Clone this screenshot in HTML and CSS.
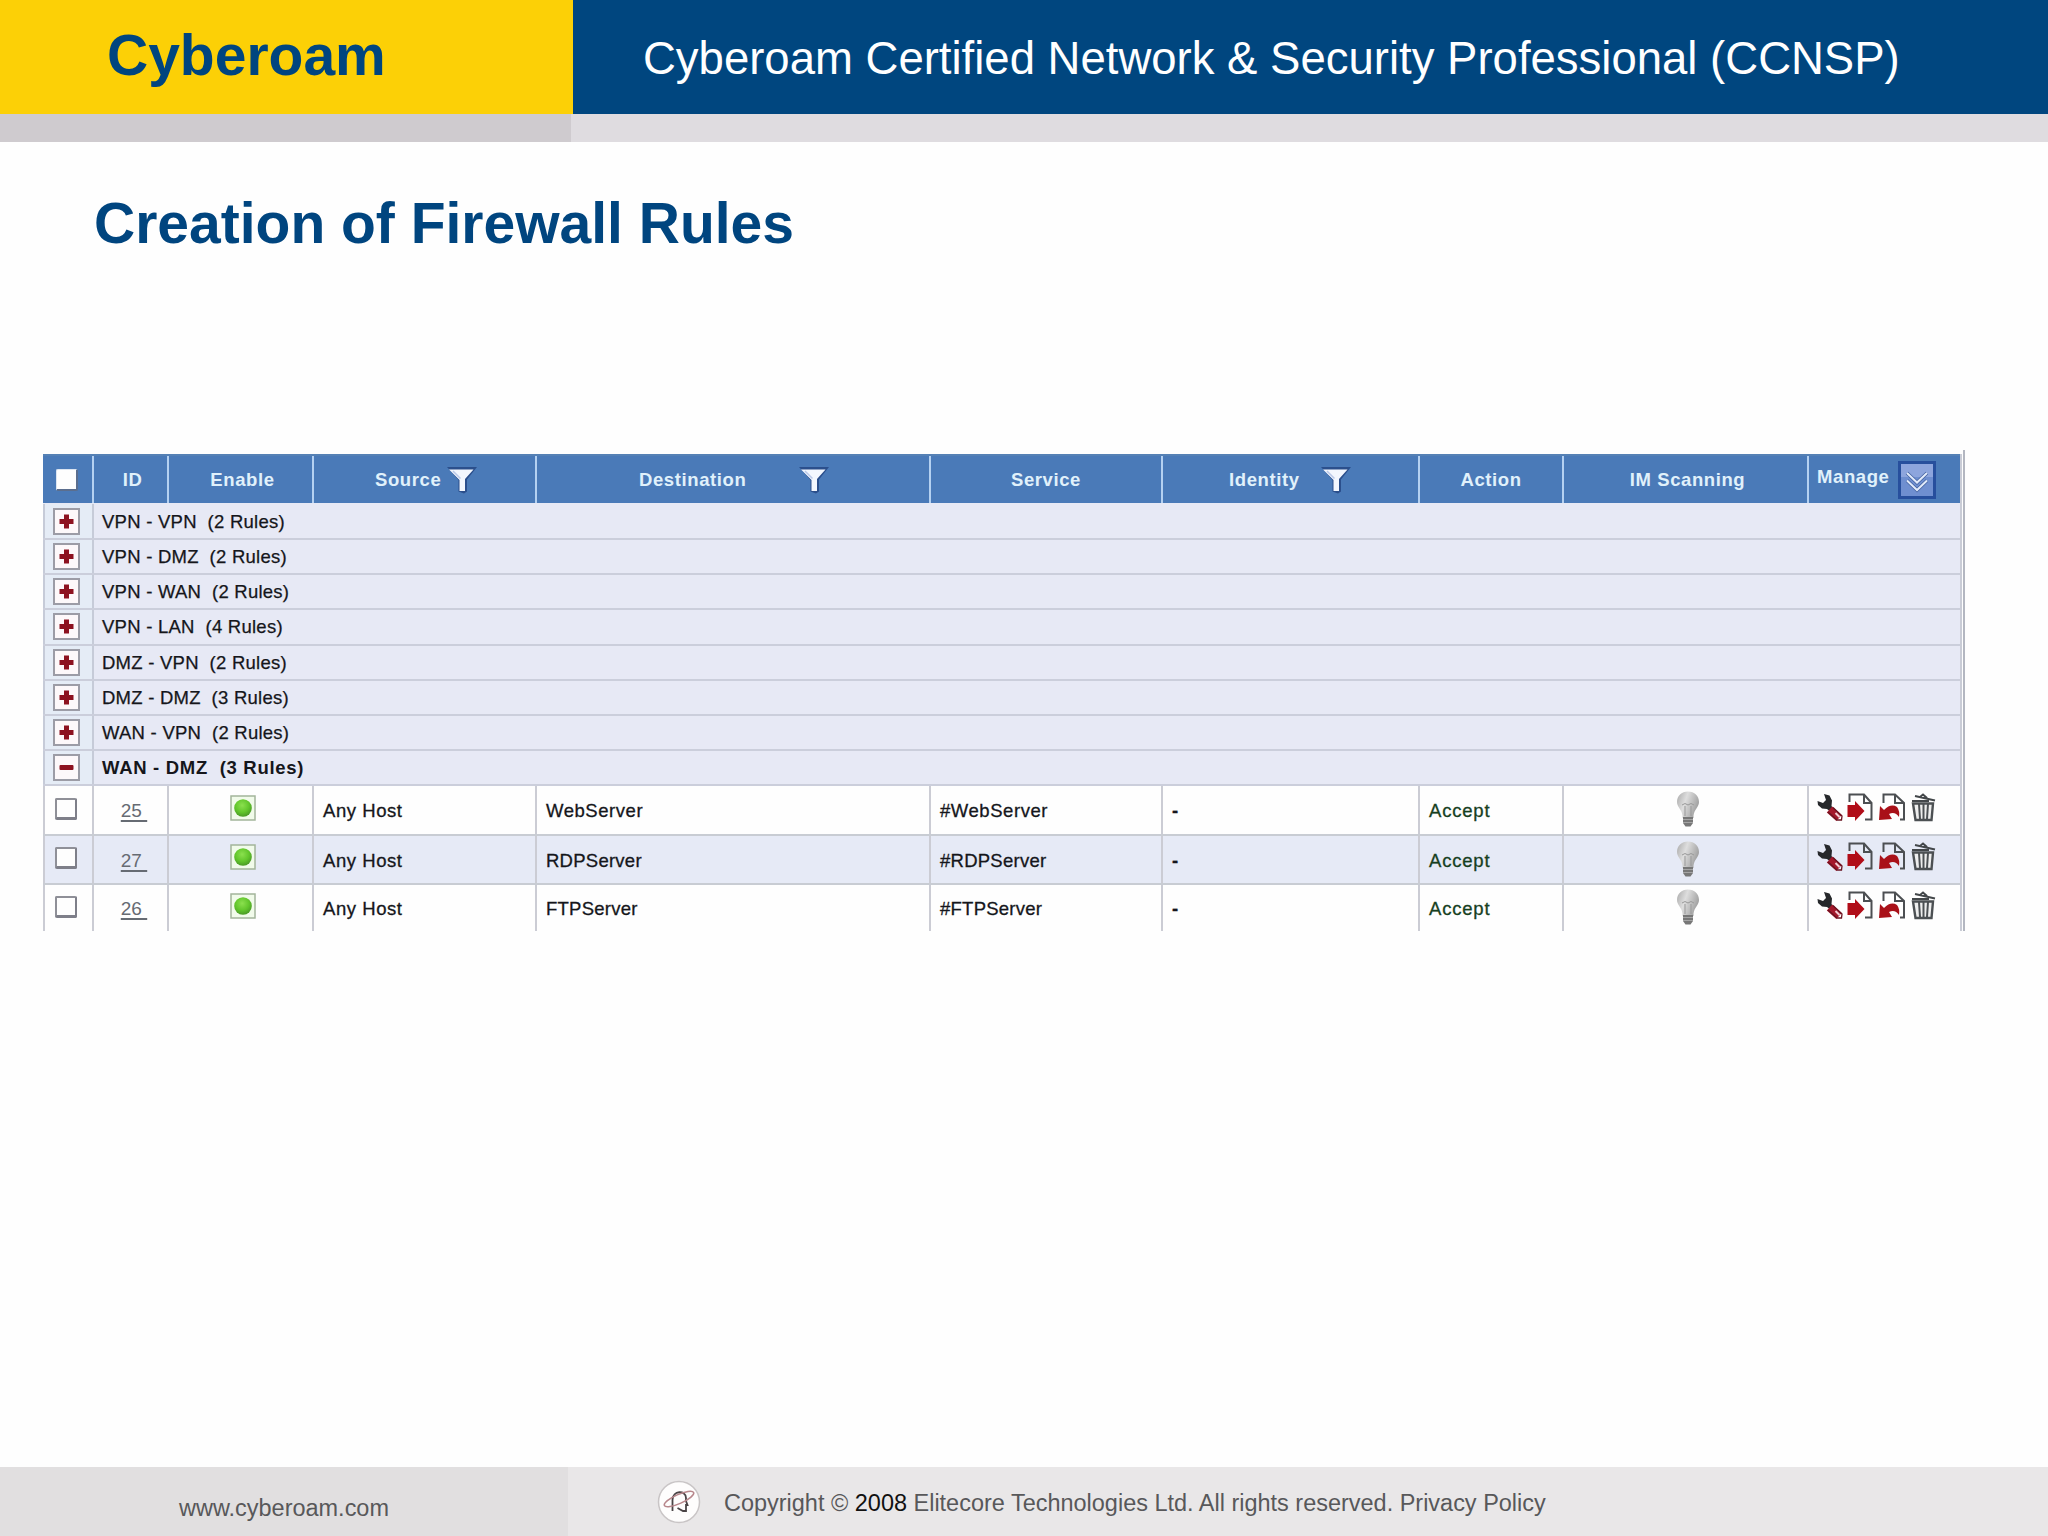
FILE: index.html
```html
<!DOCTYPE html>
<html lang="en">
<head>
<meta charset="utf-8">
<title>Creation of Firewall Rules</title>
<link rel="stylesheet" href="styles.css">
</head>
<body>
<svg class="defs" width="0" height="0" aria-hidden="true">
  <defs>
    <linearGradient id="bulbFill" x1="0" x2="1" y1="0" y2="0.4"><stop offset="0" stop-color="#a9a9a9"/><stop offset=".45" stop-color="#dedede"/><stop offset="1" stop-color="#a2a2a2"/></linearGradient>
    <radialGradient id="ledFill" cx=".45" cy=".35" r=".65"><stop offset="0" stop-color="#8be04e"/><stop offset=".6" stop-color="#62c62c"/><stop offset="1" stop-color="#4a9a26"/></radialGradient>
  </defs>
  <symbol id="funnel" viewBox="0 0 30 28">
    <path d="M0 1H30L20 13.500V25.500L17 27.500L11.500 25.500V14Z" fill="#2b4f8c"/>
    <path d="M2 3.500H26.500L18 13V25H12.500V14Z" fill="#f3f7fe"/>
    <path d="M6 5L13.500 12.500" stroke="#b9c8e8" stroke-width="1.500"/>
  </symbol>
  <symbol id="plus" viewBox="0 0 27 27">
    <rect x="1" y="1" width="25" height="25" fill="#fdf8fa" stroke="#9c9ca6" stroke-width="2"/>
    <path d="M11 6.500H16V11H20.500V16H16V20.500H11V16H6.500V11H11Z" fill="#8d1220"/>
  </symbol>
  <symbol id="minus" viewBox="0 0 27 27">
    <rect x="1" y="1" width="25" height="25" fill="#fdf8fa" stroke="#9c9ca6" stroke-width="2"/>
    <rect x="6.500" y="11" width="14" height="5" rx="1" fill="#8d1220"/>
  </symbol>
  <symbol id="led" viewBox="0 0 26 26">
    <rect x="1" y="1" width="24" height="24" fill="#f1fbea" stroke="#a3b59b" stroke-width="1.500"/>
    <circle cx="13" cy="13" r="8.800" fill="url(#ledFill)"/>
  </symbol>
  <symbol id="bulb" viewBox="0 0 24 38">
    <path d="M12 1.500C5.500 1.500 1 6 1 12C1 17 5.500 19 6.500 25.500V28H17.500V25.500C18.500 19 23 17 23 12C23 6 18.500 1.500 12 1.500Z" fill="url(#bulbFill)"/>
    <path d="M6 15Q9 12 12 15Q15 12 18 15M9 16V26M15 16V26" stroke="#999" stroke-width="1" fill="none"/>
    <path d="M7 27H17V33L14.500 36.500H9.500L7 33Z" fill="#777"/>
    <path d="M7 29.500H17M7 32.500H17" stroke="#a5a5a5"/>
  </symbol>
  <symbol id="wrench" viewBox="0 0 26 28">
    <path d="M7 1L12.500 2.500L15 7.500L14.500 13L16.500 16L13 18.500L10 16L5 15.500L1 12L.5 8L6 10L9 7Z" fill="#26282b"/>
    <path d="M12.500 16.500L22 25" stroke="#a3182b" stroke-width="8"/>
    <path d="M18.500 20L22.500 24" stroke="#f0ccd3" stroke-width="2"/>
    <path d="M16 14.500L25 23L24.500 27H20L11 19" stroke="#6a1320" stroke-width="1.300" fill="none"/>
  </symbol>
  <symbol id="insert" viewBox="0 0 27 29">
    <path d="M2.500 9V1.500H17L24.500 10V26.500H18M17 2V10H24" fill="none" stroke="#4c4f52" stroke-width="2"/>
    <path d="M.5 12H8V8L17.500 18L8 28V24H.5Z" fill="#b10d18"/>
  </symbol>
  <symbol id="undo" viewBox="0 0 27 29">
    <path d="M4.500 10V1.500H16L25 10V26.500H21M16 2V10H24" fill="none" stroke="#4c4f52" stroke-width="2"/>
    <path d="M1 13L5 17Q12 10 18 14Q21 18 20 24Q16 18 10 21L13 26L0 27Z" fill="#a91119"/>
  </symbol>
  <symbol id="bin" viewBox="0 0 25 29">
    <path d="M4 3L24 7.500M1 8H18M9 4L12 1.500L16 5" fill="none" stroke="#43474a" stroke-width="2"/>
    <path d="M2 10.500H22L20.500 27H4.500Z" fill="#eee" stroke="#4c5053" stroke-width="2.400"/>
    <path d="M8 11L9 26M12.500 11V26M17 11L16 26" stroke="#4c5053" stroke-width="2"/>
  </symbol>
</svg>

<div class="slide">
  <header class="masthead">
    <div class="brand">Cyberoam</div>
    <div class="course">Cyberoam Certified Network &amp; Security Professional (CCNSP)</div>
  </header>
  <div class="underbar"><div class="underbar-left"></div></div>

  <main class="content">
    <h1 class="title">Creation of Firewall Rules</h1>
    <section class="rules">
      <div class="table">
        <div class="row head">
          <div class="cell mid"><span class="box box-head"></span></div>
          <div class="cell mid">ID</div>
          <div class="cell mid">Enable</div>
          <div class="cell source">Source<svg class="funnel"><use href="#funnel"/></svg></div>
          <div class="cell destination">Destination<svg class="funnel"><use href="#funnel"/></svg></div>
          <div class="cell mid">Service</div>
          <div class="cell identity">Identity<svg class="funnel"><use href="#funnel"/></svg></div>
          <div class="cell mid">Action</div>
          <div class="cell mid">IM Scanning</div>
          <div class="cell manage"><span class="manage-label">Manage</span>
            <svg class="expand" viewBox="0 0 38 38"><rect x="1.500" y="1.500" width="35" height="35" fill="#6f8fd0" stroke="#274f9d" stroke-width="3"/><rect x="3" y="3" width="32" height="13" fill="#8da5dd"/><path d="M9 12L19 21.500L29 12M9 19.500L19 29L29 19.500" fill="none" stroke="#41609f" stroke-width="3.500"/><path d="M9 12L19 21.500L29 12M9 19.500L19 29L29 19.500" fill="none" stroke="#e1eafa" stroke-width="2"/></svg>
          </div>
        </div>

        <div class="row group first"><div class="cell mid"><svg class="toggle"><use href="#plus"/></svg></div><div class="cell name">VPN - VPN&nbsp; (2 Rules)</div></div>
        <div class="row group"><div class="cell mid"><svg class="toggle"><use href="#plus"/></svg></div><div class="cell name">VPN - DMZ&nbsp; (2 Rules)</div></div>
        <div class="row group"><div class="cell mid"><svg class="toggle"><use href="#plus"/></svg></div><div class="cell name">VPN - WAN&nbsp; (2 Rules)</div></div>
        <div class="row group"><div class="cell mid"><svg class="toggle"><use href="#plus"/></svg></div><div class="cell name">VPN - LAN&nbsp; (4 Rules)</div></div>
        <div class="row group"><div class="cell mid"><svg class="toggle"><use href="#plus"/></svg></div><div class="cell name">DMZ - VPN&nbsp; (2 Rules)</div></div>
        <div class="row group"><div class="cell mid"><svg class="toggle"><use href="#plus"/></svg></div><div class="cell name">DMZ - DMZ&nbsp; (3 Rules)</div></div>
        <div class="row group"><div class="cell mid"><svg class="toggle"><use href="#plus"/></svg></div><div class="cell name">WAN - VPN&nbsp; (2 Rules)</div></div>
        <div class="row group"><div class="cell mid"><svg class="toggle"><use href="#minus"/></svg></div><div class="cell name open">WAN - DMZ&nbsp; (3 Rules)</div></div>

        <div class="row rule">
          <div class="cell mid"><span class="box"></span></div><div class="cell mid"><span class="id">25&nbsp;</span></div>
          <div class="cell mid"><svg class="led"><use href="#led"/></svg></div>
          <div class="cell text">Any Host</div><div class="cell text">WebServer</div><div class="cell text">#WebServer</div><div class="cell text dash">-</div><div class="cell text accept">Accept</div>
          <div class="cell mid"><svg class="bulb"><use href="#bulb"/></svg></div>
          <div class="cell tools"><svg class="wrench"><use href="#wrench"/></svg><svg class="page"><use href="#insert"/></svg><svg class="page"><use href="#undo"/></svg><svg class="bin"><use href="#bin"/></svg></div>
        </div>
        <div class="row rule alt">
          <div class="cell mid"><span class="box"></span></div><div class="cell mid"><span class="id">27&nbsp;</span></div>
          <div class="cell mid"><svg class="led"><use href="#led"/></svg></div>
          <div class="cell text">Any Host</div><div class="cell text caps">RDPServer</div><div class="cell text caps">#RDPServer</div><div class="cell text dash">-</div><div class="cell text accept">Accept</div>
          <div class="cell mid"><svg class="bulb"><use href="#bulb"/></svg></div>
          <div class="cell tools"><svg class="wrench"><use href="#wrench"/></svg><svg class="page"><use href="#insert"/></svg><svg class="page"><use href="#undo"/></svg><svg class="bin"><use href="#bin"/></svg></div>
        </div>
        <div class="row rule last">
          <div class="cell mid"><span class="box"></span></div><div class="cell mid"><span class="id">26&nbsp;</span></div>
          <div class="cell mid"><svg class="led"><use href="#led"/></svg></div>
          <div class="cell text">Any Host</div><div class="cell text caps">FTPServer</div><div class="cell text caps">#FTPServer</div><div class="cell text dash">-</div><div class="cell text accept">Accept</div>
          <div class="cell mid"><svg class="bulb"><use href="#bulb"/></svg></div>
          <div class="cell tools"><svg class="wrench"><use href="#wrench"/></svg><svg class="page"><use href="#insert"/></svg><svg class="page"><use href="#undo"/></svg><svg class="bin"><use href="#bin"/></svg></div>
        </div>
      </div>
    </section>
  </main>

  <footer class="footer">
    <div class="site">www.cyberoam.com</div>
    <div class="legal">
      <svg class="logo" viewBox="0 0 44 44"><circle cx="22" cy="22" r="20.500" fill="#fefdfd" stroke="#c9c5c6" stroke-width="1.500"/><path d="M15.500 31V20C15.500 10 29 10 29 18V21L30.500 25H29V31H26L20.500 28" fill="none" stroke="#4a4446" stroke-width="1.800"/><ellipse cx="22" cy="19" rx="16" ry="4.500" transform="rotate(-24 22 19)" fill="none" stroke="#b8878c" stroke-width="1.600"/></svg>
      <div class="copyright">Copyright © <span class="year">2008</span> Elitecore Technologies Ltd. All rights reserved. Privacy Policy</div>
    </div>
  </footer>
</div>
</body>
</html>
```

FILE: styles.css
```css
* { box-sizing: border-box; }
body { margin: 0; background: #fefefe; font-family: "Liberation Sans", Arial, sans-serif; }
svg { display: block; flex: none; }
.defs { position: absolute; }
.slide { width: 2048px; height: 1536px; display: flex; flex-direction: column; overflow: hidden; }

.masthead { display: flex; height: 114px; flex: none; white-space: nowrap; }
.brand { width: 573px; padding-left: 107px; background: #fcd006; color: #00457f; font-size: 57px; font-weight: bold; line-height: 111px; }
.course { flex: 1; padding: 2px 0 0 70px; background: #00467f; color: #fff; font-size: 45.5px; line-height: 114px; }
.underbar { height: 28px; flex: none; background: #dfdce0; }
.underbar-left { width: 571px; height: 100%; background: #cfcbcf; }

.content { flex: 1; padding-top: 48px; }
.title { margin: 0 0 0 94px; height: 66px; font-size: 57px; line-height: 66px; color: #00457f; white-space: nowrap; }
.rules { width: 1922px; height: 481px; margin: 194px 0 0 43px; padding-top: 4px; border-right: 2px solid #b3b7c1; }
.table { width: 1919px; height: 477px; border-right: 2px solid #c9ccd6; }
.row { display: grid; grid-template-columns: 51px 75px 145px 223px 394px 232px 257px 144px 245px 151px; }
.cell { display: flex; align-items: center; min-width: 0; white-space: pre; }
.mid { justify-content: center; }

.head { height: 49px; border-top: 2px solid #5581b5; background: #4a7ab8; color: #e0f1fb; font-size: 18.5px; font-weight: bold; letter-spacing: .6px; }
.head .cell { border-right: 2px solid #b5d1f1; }
.head .cell:first-child { padding-right: 2px; }
.head .cell:last-child { border-right: 0; }
.head .mid + .mid { padding-left: 4px; }
.funnel { width: 30px; height: 28px; }
.source { padding-left: 61px; gap: 6px; }
.destination { padding-left: 102px; gap: 53px; }
.identity { padding-left: 66px; gap: 21px; }
.manage { padding-left: 8px; gap: 9px; }
.manage-label { padding-bottom: 5px; }
.expand { width: 38px; height: 38px; }

.box { width: 22px; height: 22px; background: #fefefe; border: 2px solid #8f9098; border-right-color: #7e7f89; border-bottom: 3px solid #7e7f89; border-radius: 2px; }
.box-head { border-color: #dce5f1 #5b6e8e #5b6e8e #dce5f1; border-width: 1px 2px 2px 1px; }

.group { grid-template-columns: 51px 1fr; height: 35.2px; background: #e7e9f5; border-bottom: 2px solid #cbcedb; }
.group.first { height: 37px; padding-top: 1px; }
.group .cell:first-child { border-right: 2px solid #c6cbd8; border-left: 2px solid #c6cbd8; background: #e5ecf6; padding-right: 5px; }
.toggle { width: 27px; height: 27px; }
.name { padding-left: 8px; padding-top: 1px; color: #15161b; font-size: 18.5px; letter-spacing: .25px; -webkit-text-stroke: .25px; }
.open { font-weight: bold; letter-spacing: .7px; -webkit-text-stroke: 0; }

.rule { height: 49.3px; background: #fefefe; border-bottom: 2px solid #c8ccd3; }
.rule .cell { border-right: 2px solid #cbccd4; }
.rule .cell:first-child { border-left: 2px solid #cbccd4; padding: 0 5px 2px 0; }
.rule .cell:last-child { border-right: 0; }
.alt { background: #e6eaf6; }
.last { height: 46px; border-bottom: 0; }
.id { color: #666b73; font-size: 19px; text-decoration: underline; text-decoration-thickness: 2px; text-underline-offset: 3px; padding: 3px 0 0 7px; }
.led { width: 26px; height: 26px; margin: 0 0 4px 5px; }
.text { padding: 3px 0 0 9px; color: #15161b; font-size: 18.5px; letter-spacing: .55px; -webkit-text-stroke: .3px; }
.caps { letter-spacing: .25px; }
.dash { font-weight: bold; }
.accept { color: #17401f; letter-spacing: .8px; }
.bulb { width: 24px; height: 38px; margin: 0 0 1px 5px; }
.tools { padding: 0 0 5px 8px; }
.wrench { width: 26px; height: 28px; margin-right: 4px; }
.page { width: 27px; height: 29px; margin-right: 5px; }
.bin { width: 25px; height: 29px; }

.footer { display: flex; height: 69px; flex: none; color: #58585a; font-size: 23.48px; white-space: nowrap; }
.site { width: 568px; padding: 14px 0 0 179px; background: #e1dfe0; line-height: 54px; }
.legal { flex: 1; display: flex; align-items: flex-start; padding: 13px 0 0 89px; background: #e9e7e8; }
.logo { width: 44px; height: 44px; }
.copyright { margin-left: 23px; line-height: 46px; }
.year { color: #111; }
```
